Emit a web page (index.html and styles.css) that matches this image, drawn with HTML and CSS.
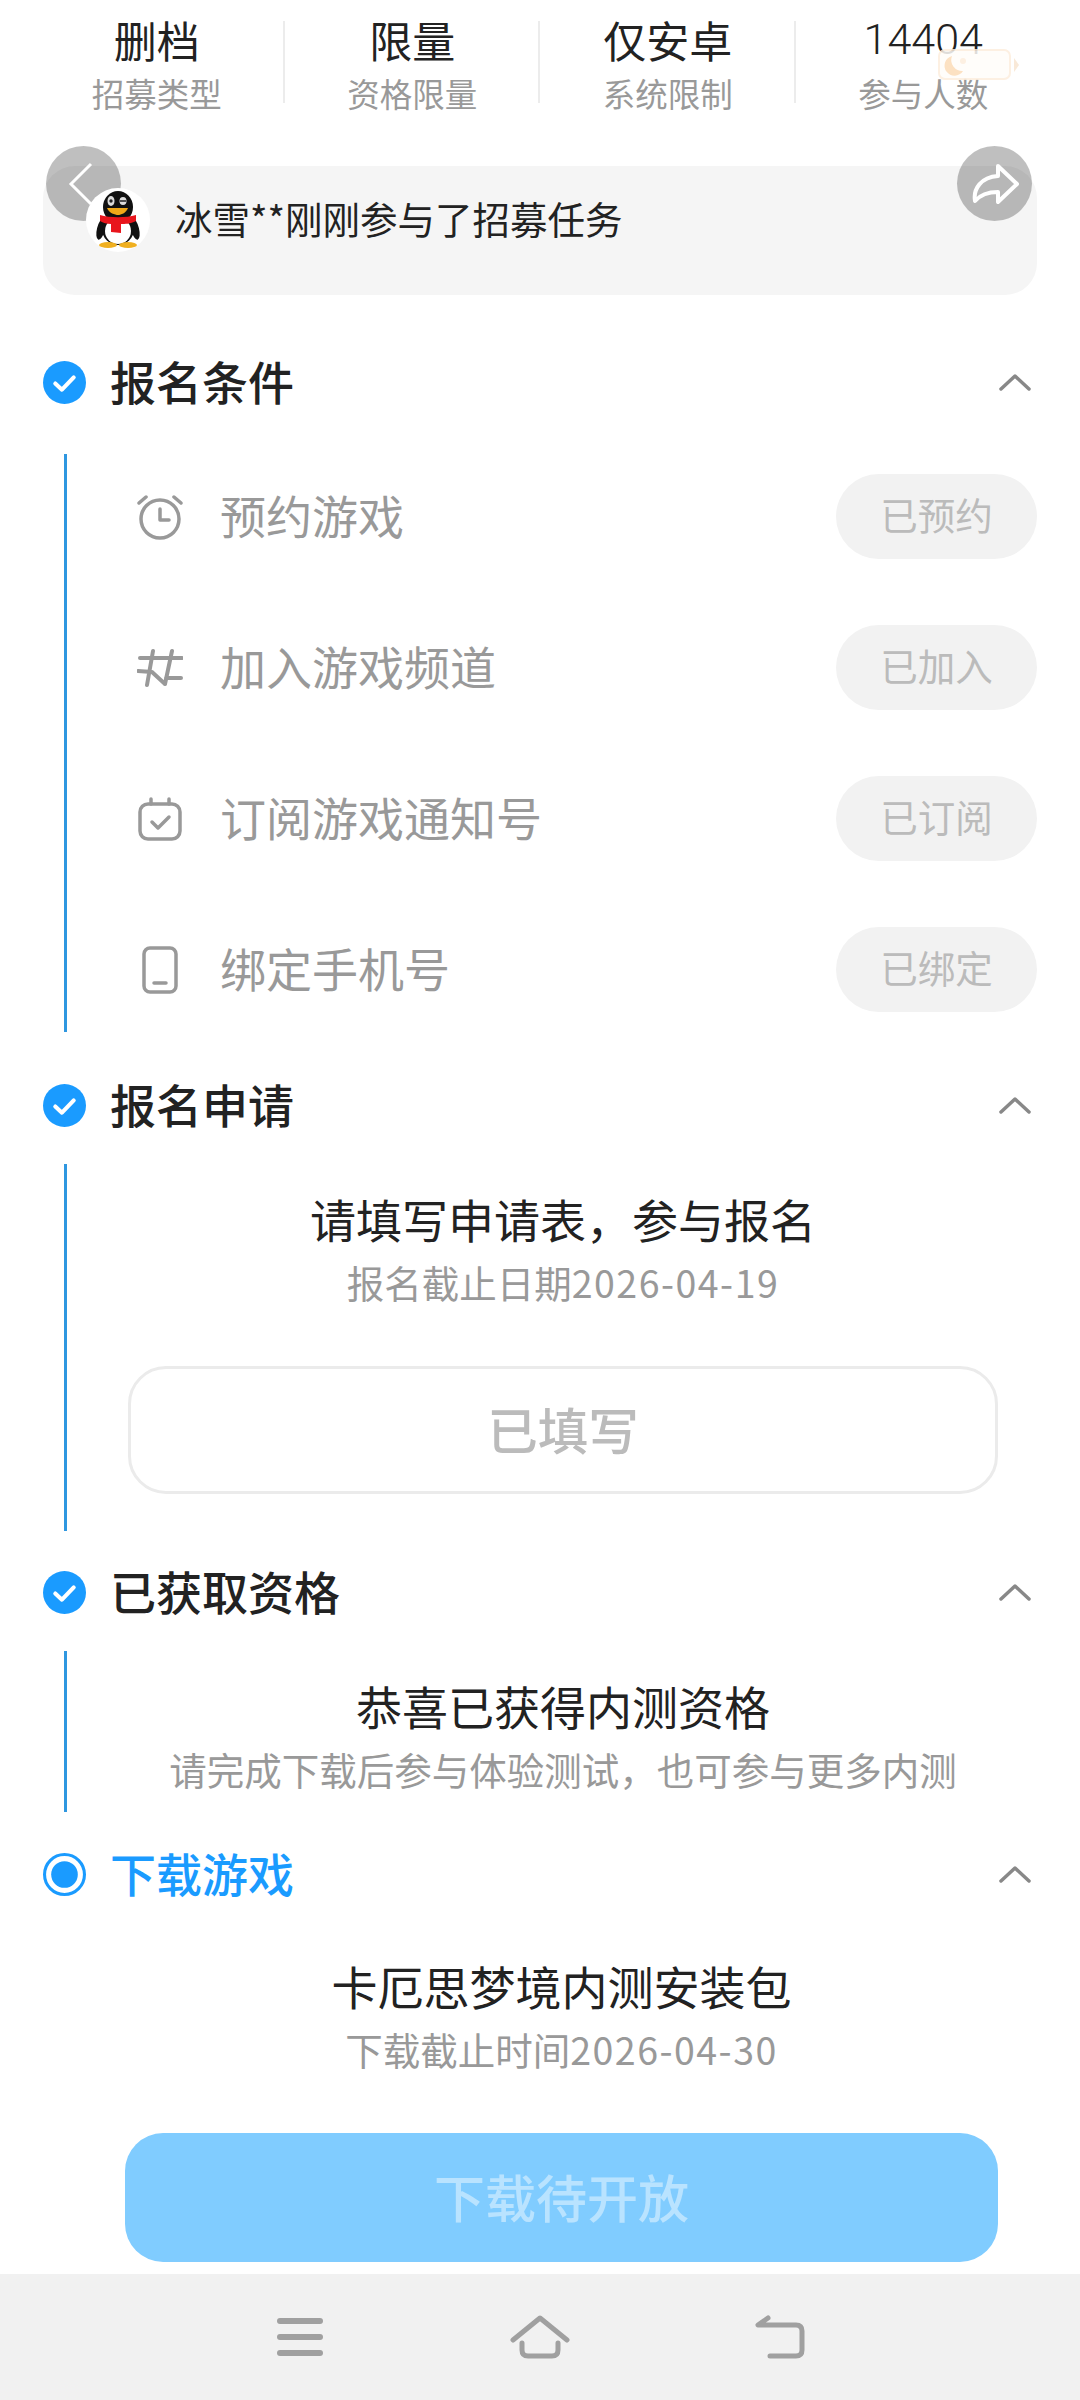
FILE: index.html
```html
<!DOCTYPE html>
<html lang="zh-CN">
<head>
    <meta charset="UTF-8">
    <meta name="viewport" content="width=device-width, initial-scale=1.0">
    <title>招募任务</title>
    <link rel="stylesheet" href="styles.css">
</head>
<body>
<div class="page">
    <main class="content">
        <div class="stats">
            <div class="stat"><div class="stat-value">删档</div><div class="stat-label">招募类型</div></div>
            <div class="stat"><div class="stat-value">限量</div><div class="stat-label">资格限量</div></div>
            <div class="stat"><div class="stat-value">仅安卓</div><div class="stat-label">系统限制</div></div>
            <div class="stat"><div class="stat-value stat-value-num">14404</div><div class="stat-label">参与人数</div></div>
            <svg class="battery" width="84" height="32" viewBox="0 0 84 32">
                <rect x="1" y="1" width="71" height="29" rx="6" fill="#fffdfa" stroke="#fdeedd" stroke-width="2"/>
                <path d="M14 7a10 10 0 1 0 11 15a11 11 0 0 1-11-15z" fill="#fcdcb8"/>
                <circle cx="25" cy="12" r="3" fill="#fdeedd"/>
                <path d="M76 9l5 7l-5 7z" fill="#f8e6d2"/>
            </svg>
        </div>

        <div class="banner">
            <div class="round-btn round-btn-left">
                <svg width="26" height="44" viewBox="0 0 26 44"><path d="M23 2L3 22l20 20" fill="none" stroke="#fff" stroke-width="3"/></svg>
            </div>
            <div class="round-btn round-btn-right">
                <svg width="48" height="42" viewBox="0 0 48 42"><path d="M27 3l19 18l-19 18v-10c-10 0-17 2-23 9c-2-12 6-24 23-25z" fill="none" stroke="#fff" stroke-width="4" stroke-linejoin="round"/></svg>
            </div>
            <div class="avatar">
                <svg width="48" height="58" viewBox="0 0 48 58">
                    <ellipse cx="7" cy="38" rx="4" ry="11" fill="#111" transform="rotate(14 7 38)"/>
                    <ellipse cx="41" cy="38" rx="4" ry="11" fill="#111" transform="rotate(-14 41 38)"/>
                    <ellipse cx="24" cy="16" rx="15" ry="16" fill="#111"/>
                    <ellipse cx="24" cy="38" rx="16" ry="16" fill="#111"/>
                    <ellipse cx="24" cy="40" rx="13" ry="13" fill="#fff"/>
                    <ellipse cx="17" cy="10" rx="3.5" ry="5" fill="#ddd"/>
                    <ellipse cx="29" cy="10" rx="3.5" ry="4" fill="#ddd"/>
                    <circle cx="17" cy="10" r="1.7" fill="#222"/>
                    <path d="M26 10h6" stroke="#222" stroke-width="1.5"/>
                    <path d="M13 17h21c-2 5-7 7-10 7s-9-2-11-7z" fill="#f0a818"/>
                    <path d="M6 24c10 3 26 3 36 0v6c-6 3-11 3-15 3v9l-10-1v-8c-4 0-8-1-11-3z" fill="#e8151c"/>
                    <ellipse cx="14" cy="54" rx="9" ry="3" fill="#f0b020"/>
                    <ellipse cx="34" cy="54" rx="9" ry="3" fill="#f0b020"/>
                </svg>
            </div>
            <div class="banner-text">冰雪**刚刚参与了招募任务</div>
        </div>

        <section class="step">
            <div class="step-head">
                <svg class="step-mark" width="43" height="43" viewBox="0 0 42 42"><circle cx="21" cy="21" r="21" fill="#1a9bff"/><path d="M12 22l6.500 6L30 16" fill="none" stroke="#fff" stroke-width="4" stroke-linecap="round" stroke-linejoin="round"/></svg>
                <h2 class="step-title">报名条件</h2>
                <svg class="chevron" width="32" height="20" viewBox="0 0 32 20"><path d="M2 17L16 4l14 13" fill="none" stroke="#888" stroke-width="3.500" stroke-linecap="round" stroke-linejoin="round"/></svg>
            </div>
            <div class="step-body step-body-tasks">
                <div class="task">
                    <svg class="task-icon" width="46" height="46" viewBox="0 0 46 46" fill="none" stroke="#999" stroke-width="3.500" stroke-linecap="round" stroke-linejoin="round"><circle cx="23" cy="25" r="19"/><path d="M23 15v11h9"/><path d="M2 9l7-6M44 9l-7-6"/></svg>
                    <span class="task-name">预约游戏</span>
                    <span class="task-btn">已预约</span>
                </div>
                <div class="task">
                    <svg class="task-icon" width="46" height="40" viewBox="0 0 46 40" fill="none" stroke="#999" stroke-width="4" stroke-linecap="round" stroke-linejoin="round"><path d="M3 10h42M1 23l14 1l13 12M29 30h15M16 3l-6 34M35 3l-7 33"/></svg>
                    <span class="task-name">加入游戏频道</span>
                    <span class="task-btn">已加入</span>
                </div>
                <div class="task">
                    <svg class="task-icon" width="46" height="44" viewBox="0 0 46 44" fill="none" stroke="#999" stroke-width="3.500" stroke-linecap="round" stroke-linejoin="round"><rect x="3" y="7" width="40" height="35" rx="8"/><path d="M14 2v5M32 2v5M15 25l6 6l11-11"/></svg>
                    <span class="task-name">订阅游戏通知号</span>
                    <span class="task-btn">已订阅</span>
                </div>
                <div class="task">
                    <svg class="task-icon" width="46" height="48" viewBox="0 0 46 48" fill="none" stroke="#999" stroke-width="3.500" stroke-linecap="round" stroke-linejoin="round"><rect x="7" y="2" width="32" height="44" rx="6"/><path d="M17 37h12"/></svg>
                    <span class="task-name">绑定手机号</span>
                    <span class="task-btn">已绑定</span>
                </div>
            </div>
        </section>

        <section class="step">
            <div class="step-head">
                <svg class="step-mark" width="43" height="43" viewBox="0 0 42 42"><circle cx="21" cy="21" r="21" fill="#1a9bff"/><path d="M12 22l6.500 6L30 16" fill="none" stroke="#fff" stroke-width="4" stroke-linecap="round" stroke-linejoin="round"/></svg>
                <h2 class="step-title">报名申请</h2>
                <svg class="chevron" width="32" height="20" viewBox="0 0 32 20"><path d="M2 17L16 4l14 13" fill="none" stroke="#888" stroke-width="3.500" stroke-linecap="round" stroke-linejoin="round"/></svg>
            </div>
            <div class="step-body step-body-apply">
                <div class="info-title">请填写申请表，参与报名</div>
                <div class="info-sub">报名截止日期<span class="date">2026-04-19</span></div>
                <div class="outline-btn">已填写</div>
            </div>
        </section>

        <section class="step">
            <div class="step-head">
                <svg class="step-mark" width="43" height="43" viewBox="0 0 42 42"><circle cx="21" cy="21" r="21" fill="#1a9bff"/><path d="M12 22l6.500 6L30 16" fill="none" stroke="#fff" stroke-width="4" stroke-linecap="round" stroke-linejoin="round"/></svg>
                <h2 class="step-title">已获取资格</h2>
                <svg class="chevron" width="32" height="20" viewBox="0 0 32 20"><path d="M2 17L16 4l14 13" fill="none" stroke="#888" stroke-width="3.500" stroke-linecap="round" stroke-linejoin="round"/></svg>
            </div>
            <div class="step-body step-body-qualified">
                <div class="info-title">恭喜已获得内测资格</div>
                <div class="info-sub">请完成下载后参与体验测试，也可参与更多内测</div>
            </div>
        </section>

        <section class="step">
            <div class="step-head">
                <svg class="step-mark" width="43" height="43" viewBox="0 0 42 42"><circle cx="21" cy="21" r="19.500" fill="none" stroke="#1a9bff" stroke-width="3"/><circle cx="21" cy="21" r="13" fill="#1a9bff"/></svg>
                <h2 class="step-title step-title-active">下载游戏</h2>
                <svg class="chevron" width="32" height="20" viewBox="0 0 32 20"><path d="M2 17L16 4l14 13" fill="none" stroke="#888" stroke-width="3.500" stroke-linecap="round" stroke-linejoin="round"/></svg>
            </div>
            <div class="step-body-download">
                <div class="info-title">卡厄思梦境内测安装包</div>
                <div class="info-sub">下载截止时间<span class="date">2026-04-30</span></div>
                <div class="download-btn">下载待开放</div>
            </div>
        </section>
    </main>

    <nav class="navbar">
        <div class="nav-item">
            <svg width="46" height="38" viewBox="0 0 46 38" fill="#a0a0a0"><rect width="46" height="6" rx="3"/><rect y="16" width="46" height="6" rx="3"/><rect y="32" width="46" height="6" rx="3"/></svg>
        </div>
        <div class="nav-item">
            <svg width="60" height="44" viewBox="0 0 60 44" fill="none" stroke="#a0a0a0" stroke-width="5" stroke-linecap="round" stroke-linejoin="round"><path d="M3 25L30 3l27 22"/><path d="M12 28v7c0 4 2 6 6 6h24c4 0 6-2 6-6v-7"/></svg>
        </div>
        <div class="nav-item">
            <svg width="50" height="44" viewBox="0 0 50 44" fill="none" stroke="#a0a0a0" stroke-width="5" stroke-linecap="round" stroke-linejoin="round"><path d="M13 3L3 10h38c4 0 6 2 6 6v19c0 4-2 6-6 6H15"/></svg>
        </div>
    </nav>
</div>
</body>
</html>
```

FILE: styles.css
```css
* {
    box-sizing: border-box;
}
body {
    margin: 0;
    background: #fff;
    color: #222;
    font-family: "Noto Sans CJK SC", "Noto Sans", sans-serif;
}
.page {
    width: 1080px;
    height: 2400px;
    display: flex;
    flex-direction: column;
    overflow: hidden;
}
.content {
    flex: 1;
}

/* top stats */
.stats {
    position: relative;
    display: grid;
    grid-template-columns: repeat(4, 1fr);
    padding: 14px 29px 0;
    text-align: center;
}
.stat {
    position: relative;
}
.stat:not(:last-of-type)::after {
    content: "";
    position: absolute;
    right: 0;
    top: 7px;
    width: 2px;
    height: 82px;
    background: #ececec;
}
.stat-value {
    font-size: 43px;
    line-height: 50px;
    color: #222;
}
.stat-value-num {
    font-family: Roboto, sans-serif;
    font-weight: 300;
}
.stat-label {
    margin-top: 4px;
    font-size: 32.500px;
    line-height: 50px;
    color: #999;
}
.battery {
    position: absolute;
    left: 938px;
    top: 49px;
    opacity: 0.85;
}

/* ticker banner */
.banner {
    position: relative;
    display: flex;
    gap: 25px;
    height: 129px;
    margin: 48px 43px 28px;
    padding: 22px 0 0 43px;
    background: #f5f5f5;
    border-radius: 32px;
}
.round-btn {
    position: absolute;
    top: -20px;
    width: 75px;
    height: 75px;
    display: flex;
    align-items: center;
    justify-content: center;
    background: rgba(0, 0, 0, 0.25);
    border-radius: 50%;
}
.round-btn-left {
    left: 3px;
    padding-right: 6px;
}
.round-btn-right {
    right: 5px;
}
.avatar {
    position: relative;
    width: 64px;
    height: 64px;
    display: flex;
    align-items: center;
    justify-content: center;
    background: #fff;
    border-radius: 50%;
}
.banner-text {
    font-size: 37.500px;
    line-height: 60px;
    color: #222;
}

/* steps */
.step-head {
    display: flex;
    align-items: center;
    height: 118px;
    padding: 0 49px 0 43px;
}
.step-mark {
    flex: none;
}
.step-title {
    flex: 1;
    margin: 0 0 5px 24px;
    font-size: 46px;
    font-weight: 500;
    line-height: 60px;
    color: #222;
}
.step-title-active {
    color: #1a9bff;
}
.step-body {
    margin-left: 64px;
    border-left: 3px solid #2f97e0;
    text-align: center;
}
.step-body-tasks {
    display: flex;
    flex-direction: column;
    gap: 66px;
    margin-top: 13px;
    margin-bottom: 14px;
    padding: 20px 43px 20px 70px;
}
.task {
    display: flex;
    align-items: center;
    height: 85px;
}
.task-icon {
    flex: none;
}
.task-name {
    flex: 1;
    margin: 0 0 5px 37px;
    font-size: 46px;
    line-height: 60px;
    color: #999;
    text-align: left;
}
.task-btn {
    width: 201px;
    height: 85px;
    background: #f2f2f2;
    border-radius: 43px;
    font-size: 37.500px;
    line-height: 80px;
    color: #bbb;
}
.step-body-apply {
    width: 934px;
    margin-bottom: 2px;
    padding: 24px 0 37px 61px;
}
.step-body-qualified {
    width: 934px;
    margin-bottom: 3px;
    padding: 24px 0 18px 61px;
}
.step-body-download {
    width: 934px;
    margin-left: 64px;
    padding: 22px 0 0 61px;
    text-align: center;
}
.info-title {
    font-size: 46px;
    line-height: 60px;
    color: #222;
}
.info-sub {
    margin-top: 9px;
    font-size: 37.500px;
    line-height: 50px;
    color: #999;
}
.date {
    letter-spacing: 1.500px;
}
.outline-btn {
    height: 128px;
    margin-top: 59px;
    border: 3px solid #ebebeb;
    border-radius: 38px;
    font-size: 50.500px;
    font-weight: 500;
    line-height: 118px;
    color: #bbb;
}
.download-btn {
    height: 129px;
    margin-top: 59px;
    background: #80ccff;
    border-radius: 38px;
    font-size: 51px;
    font-weight: 500;
    line-height: 127px;
    color: rgba(255, 255, 255, 0.45);
}

/* bottom nav */
.navbar {
    flex: none;
    display: flex;
    justify-content: center;
    height: 126px;
    background: #f1f1f1;
}
.nav-item {
    width: 240px;
    display: flex;
    align-items: center;
    justify-content: center;
}
```
